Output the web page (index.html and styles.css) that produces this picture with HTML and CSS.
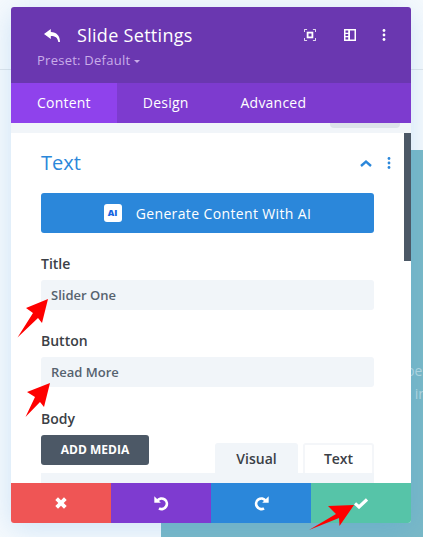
FILE: index.html
```html
<!DOCTYPE html>
<html lang="en">
<head>
<meta charset="utf-8">
<title>Slide Settings</title>
<link rel="stylesheet" href="styles.css">
</head>
<body>
<div class="stage">
  <div class="page-line"></div>
  <div class="teal">
    <p class="teal-text one">pe</p>
    <p class="teal-text two">t in</p>
  </div>
  <section class="modal">
    <header class="head">
      <div class="head-top">
        <svg class="back" viewBox="0 0 16 13"><path d="M6.800 0 0 5 6.800 10V7C11 7 13.700 8.500 14.300 13H16C16 6.500 12.500 3.200 6.800 3z" fill="#fff"/></svg>
        <h1 class="title">Slide Settings</h1>
        <svg class="hicon focus" viewBox="0 0 12 12"><path d="M.4 3V.4h2.700M8.900.4h2.700V3M11.600 9v2.600H8.900M3.100 11.600H.4V9" fill="none" stroke="#fff" stroke-width=".9"/><rect x="3.600" y="3.600" width="4.800" height="4.800" fill="none" stroke="#fff" stroke-width="1.800"/></svg>
        <svg class="hicon split" viewBox="0 0 12 12"><path fill-rule="evenodd" d="M0 0h12v12H0zM1.500 1.500v2.200h2.700V1.500zM1.500 5v2h2.700V5zM1.500 8.300v2.200h2.700V8.300zM6 1.500v9h4.500v-9z" fill="#fff"/></svg>
        <svg class="hicon dots" viewBox="0 0 4 12"><circle cx="2" cy="1.500" r="1.400" fill="#fff"/><circle cx="2" cy="6" r="1.400" fill="#fff"/><circle cx="2" cy="10.500" r="1.400" fill="#fff"/></svg>
      </div>
      <div class="preset">Preset: Default <span class="caret"></span></div>
    </header>
    <nav class="tabs">
      <span class="tab active">Content</span>
      <span class="tab">Design</span>
      <span class="tab">Advanced</span>
    </nav>
    <div class="scroller">
      <div class="strip"><span class="strip-tab"></span></div>
      <div class="panel">
        <div class="group-head">
          <h2 class="group-title">Text</h2>
          <svg class="chev" viewBox="0 0 12 7"><path d="M1 6 6 1.600 11 6" fill="none" stroke="#2b87da" stroke-width="2.400"/></svg>
          <svg class="gdots" viewBox="0 0 4 12"><circle cx="2" cy="1.500" r="1.400" fill="#2b87da"/><circle cx="2" cy="6" r="1.400" fill="#2b87da"/><circle cx="2" cy="10.500" r="1.400" fill="#2b87da"/></svg>
        </div>
        <button class="ai-btn"><span class="ai-logo">AI</span>Generate Content With AI</button>
        <label class="label label-title">Title</label>
        <div class="input">Slider One</div>
        <label class="label label-gap">Button</label>
        <div class="input">Read More</div>
        <label class="label label-gap">Body</label>
        <div class="editor-bar">
          <button class="media">ADD MEDIA</button>
          <div class="modes">
            <span class="mode visual">Visual</span>
            <span class="mode text">Text</span>
          </div>
        </div>
        <div class="editor"></div>
      </div>
      <div class="scrollbar"></div>
    </div>
    <footer class="foot">
      <span class="act red"><svg viewBox="0 0 12 12"><path d="M3 .3 6 3.300 9 .3 11.700 3 8.700 6 11.700 9 9 11.700 6 8.700 3 11.700.3 9 3.300 6 .3 3z" fill="#fff"/></svg></span>
      <span class="act purple"><svg viewBox="0 0 15 15"><path d="M3.400 4.800A5.200 5.200 0 1 1 5 12.300" fill="none" stroke="#fff" stroke-width="2.700"/><path d="M.3.300v6.500h6.500z" fill="#fff"/></svg></span>
      <span class="act blue"><svg viewBox="0 0 15 15"><path d="M11.600 4.800A5.200 5.200 0 1 0 10 12.300" fill="none" stroke="#fff" stroke-width="2.700"/><path d="M14.700.3v6.500H8.200z" fill="#fff"/></svg></span>
      <span class="act green"><svg class="check" viewBox="0 0 14 11"><path d="M1 5.300 5 9 13 1.500" fill="none" stroke="#fff" stroke-width="3.200"/></svg></span>
    </footer>
  </section>
  <svg class="arrows" viewBox="0 0 423 537">
    <path d="M48 299 26 308 33 313 17.500 337.500 38 318 42 323z" fill="#fe0000"/>
    <path d="M50 383 27 392 35 397 25.500 417 40 402 44 407z" fill="#fe0000"/>
    <path d="M354 505 328 506 336 514 309 530 339 518 339.500 526z" fill="#fe0000"/>
  </svg>
</div>
</body>
</html>
```
FILE: styles.css
```css
* { box-sizing: border-box; }
html, body { margin: 0; padding: 0; }
body { font-family: "Open Sans", sans-serif; background: #f6fafd; }
.stage { position: relative; width: 423px; height: 537px; overflow: hidden; background: #f6fafd; }
.page-line { position: absolute; left: 0; right: 0; top: 69px; height: 1px; background: #dfe5ea; }
.teal { position: absolute; left: 161px; top: 150px; width: 262px; height: 387px; background: #7ab9c7; }
.teal-text { position: absolute; margin: 0; font-size: 14px; line-height: 20px; color: rgba(255,255,255,.45); white-space: nowrap; }
.teal-text.one { top: 211px; left: 245px; }
.teal-text.two { top: 234px; left: 245px; }

.modal { position: absolute; left: 11px; top: 7px; width: 400px; height: 516px; display: flex; flex-direction: column; border-radius: 3px; overflow: hidden; box-shadow: 0 5px 30px rgba(43,135,218,.2); background: #fff; }

.head { height: 76px; background: #6a37b0; padding: 17px 0 0 26px; flex: none; }
.head-top { display: flex; align-items: center; height: 22px; }
.back { width: 16px; height: 13px; margin-left: 7px; flex: none; }
.title { margin: 0 0 0 17px; font-size: 18px; line-height: 22px; font-weight: 400; letter-spacing: .3px; color: #fff; flex: 1; }
.hicon { flex: none; }
.focus { width: 12px; height: 12px; margin-right: 28px; }
.split { width: 12px; height: 12px; margin-right: 25.500px; }
.dots { width: 4px; height: 12px; margin-right: 25.500px; }
.preset { margin-top: 5px; font-size: 13px; line-height: 18px; letter-spacing: .25px; color: #c9ade9; }
.caret { display: inline-block; width: 0; height: 0; border: 3px solid transparent; border-top: 3.500px solid #c9ade9; border-bottom: 0; vertical-align: 2px; }

.tabs { display: flex; height: 40px; background: #7d3bcf; flex: none; }
.tab { padding: 0 26px; font-size: 14px; line-height: 40px; letter-spacing: .22px; color: #fff; }
.tab.active { background: #8f42ec; }

.scroller { position: relative; flex: 1; min-height: 0; overflow: hidden; background: #fff; }
.strip { height: 10px; background: #f1f5f9; position: relative; }
.strip-tab { position: absolute; right: 11px; top: 0; width: 70px; height: 5px; background: #dde3ea; border-radius: 0 0 4px 4px; }
.panel { padding: 0 37px 0 30px; }
.scrollbar { position: absolute; right: 0; top: 10px; width: 7px; height: 128px; background: #4c5866; }

.group-head { display: flex; align-items: center; height: 60px; }
.group-title { margin: 0; flex: 1; font-size: 20px; font-weight: 400; line-height: 60px; color: #2b87da; }
.chev { width: 12px; height: 7px; margin-right: 15px; }
.gdots { width: 4px; height: 12px; margin-right: -17px; }

.ai-btn { display: flex; align-items: center; justify-content: center; width: 333px; height: 40px; border: 0; border-radius: 3px; background: #2b87da; color: #fff; font: 400 14px "Open Sans", sans-serif; letter-spacing: .37px; padding: 0; }
.ai-logo { width: 18px; height: 18px; margin-right: 14px; background: #fff; border-radius: 3px; font-size: 9px; font-weight: 800; line-height: 18px; letter-spacing: 0; color: #1663e0; text-align: center; }

.label { display: block; font-size: 14px; font-weight: 600; line-height: 20px; color: #3b4046; }
.label-title { margin-top: 21px; margin-bottom: 6px; }
.label-gap { margin-top: 21px; margin-bottom: 6px; }
.input { width: 333px; height: 30px; padding-left: 10px; border-radius: 3px; background: #f1f5f9; font-size: 13px; font-weight: 600; line-height: 30px; color: #56626f; }

.label-gap:last-of-type { margin-top: 22px; margin-bottom: 6px; }
.editor-bar { display: flex; justify-content: space-between; align-items: flex-start; width: 333px; height: 38px; }
.media { width: 108px; height: 30px; border: 0; border-radius: 3px; background: #4c5866; color: #fff; font: 700 12px/30px "Open Sans", sans-serif; padding: 0; }
.modes { display: flex; gap: 5px; margin-top: 8px; }
.mode { height: 30px; font-size: 14px; font-weight: 600; line-height: 31px; color: #3b4046; text-align: center; border-radius: 3px 3px 0 0; }
.mode.visual { width: 83px; background: #f1f5f9; }
.mode.text { width: 71px; background: #fff; border: 2px solid #f4f6f9; border-bottom: 0; line-height: 28px; }
.editor { width: 333px; height: 10px; background: #f1f5f9; }

.foot { display: flex; height: 40px; flex: none; }
.act { flex: 1; display: flex; align-items: center; justify-content: center; }
.act svg { width: 15px; height: 15px; }
.act.red { background: #ef5555; }
.act.red svg { width: 12px; height: 12px; }
.act.purple { background: #7e3bd0; }
.act.blue { background: #2b87da; }
.act.green { background: #56c4a8; }
.act svg.check { width: 14px; height: 11px; }

.arrows { position: absolute; left: 0; top: 0; width: 423px; height: 537px; pointer-events: none; }
```
